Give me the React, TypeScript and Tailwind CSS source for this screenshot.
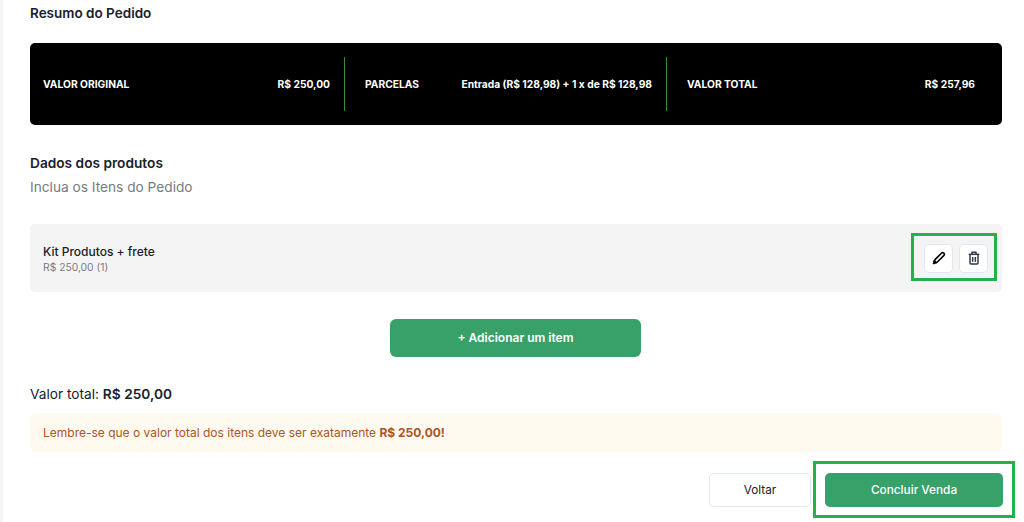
const fontFamily = 'font-["Inter",sans-serif]';

function SummaryCell({ label, value, className }: { label: string; value: string; className: string }) {
  return (
    <div className={`flex h-[54px] items-center justify-between pt-[1px] text-[10.25px] font-bold text-white ${className}`}>
      <span>{label}</span>
      <span>{value}</span>
    </div>
  );
}

function PencilIcon() {
  return (
    <svg viewBox="0 0 24 24" className="h-[16px] w-[16px] text-black" fill="none" stroke="currentColor" strokeWidth="2.4" strokeLinejoin="round">
      <path d="M5 19l1-4.5L16 4.5a2.1 2.1 0 0 1 3 0l.5.5a2.1 2.1 0 0 1 0 3L9.5 18z" />
      <path d="M3 21l1.5-6 4.5 4.5z" fill="currentColor" strokeWidth="1" />
    </svg>
  );
}

function TrashIcon() {
  return (
    <svg viewBox="0 0 24 24" className="h-[16px] w-[16px] text-[#2d3748]" fill="none" stroke="currentColor" strokeWidth="2.2" strokeLinejoin="round">
      <path d="M4 6.5h16" />
      <path d="M9 6V3.5h6V6" />
      <path d="M6 7v12.5a1.5 1.5 0 0 0 1.5 1.5h9a1.5 1.5 0 0 0 1.5-1.5V7" />
      <path d="M10 10.5v7M14 10.5v7" />
    </svg>
  );
}

export default function App() {
  return (
    <div className={`${fontFamily} relative h-[522px] w-[1024px] overflow-hidden bg-white`}>
      <div className="flex h-full">
        <div className="w-[3px] shrink-0 bg-[#f5f5f5]" />
        <main className="ml-[27px] w-[972px]">
          <h2 className="mt-[4px] h-[18px] text-[13.5px] leading-[18px] font-semibold text-[#1a202c]">Resumo do Pedido</h2>

          <section className="mt-[21px] flex h-[82px] items-center rounded-[5px] bg-black">
            <SummaryCell
              label="VALOR ORIGINAL"
              value="R$ 250,00"
              className="w-[315px] border-r border-[#2f8f3a] pr-[14px] pl-[13px]"
            />
            <SummaryCell
              label="PARCELAS"
              value="Entrada (R$ 128,98) + 1 x de R$ 128,98"
              className="w-[322px] border-r border-[#2f8f3a] pr-[14px] pl-[20px]"
            />
            <SummaryCell label="VALOR TOTAL" value="R$ 257,96" className="w-[308px] pl-[20px]" />
          </section>

          <h2 className="mt-[29px] h-[18px] text-[13.7px] leading-[18px] font-semibold text-[#1a202c]">Dados dos produtos</h2>
          <p className="mt-[6px] h-[18px] text-[13.7px] leading-[18px] text-[#757c7f]">Inclua os Itens do Pedido</p>

          <section className="mt-[28px] flex h-[68px] items-center justify-between rounded-[5px] bg-[#f4f4f4] pr-[14px] pl-[13px]">
            <div className="pt-[2px]">
              <p className="text-[12px] leading-[16px] font-medium text-[#1a202c]">Kit Produtos + frete</p>
              <p className="text-[10.3px] leading-[14px] text-[#757c7f]">R$ 250,00 (1)</p>
            </div>
            <div className="flex gap-[6px]">
              <button className="flex h-[29px] w-[29px] items-center justify-center rounded-[5px] border border-[#e2e8f0] bg-white">
                <PencilIcon />
              </button>
              <button className="flex h-[29px] w-[29px] items-center justify-center rounded-[5px] border border-[#e2e8f0] bg-white">
                <TrashIcon />
              </button>
            </div>
          </section>

          <div className="mt-[27px] flex justify-center pr-[1px]">
            <button className="h-[38px] w-[251px] rounded-[6px] bg-[#38a169] text-[12px] font-semibold text-white">
              + Adicionar um item
            </button>
          </div>

          <p className="mt-[28px] h-[18px] text-[13.7px] leading-[18px] font-normal text-[#1a202c]">
            Valor total: <span className="font-semibold">R$ 250,00</span>
          </p>

          <div className="mt-[10px] flex h-[39px] items-center rounded-[6px] bg-[#fffaf0] pl-[13px] text-[12px] text-[#ad5420]">
            <span>
              Lembre-se que o valor total dos itens deve ser exatamente <span className="font-bold">R$ 250,00!</span>
            </span>
          </div>

          <div className="mt-[21px] -mr-[1px] flex justify-end gap-[14px]">
            <button className="h-[34px] w-[102px] rounded-[5px] border border-[#e2e8f0] bg-white pt-[1px] text-[11.7px] font-normal text-[#1a202c]">
              Voltar
            </button>
            <button className="h-[34px] w-[178px] rounded-[5px] bg-[#38a169] pt-[1px] text-[11.8px] font-medium text-white">
              Concluir Venda
            </button>
          </div>
        </main>
      </div>

      {/* marcacoes verdes por cima da tela */}
      <div className="absolute top-[233px] left-[911px] h-[48px] w-[86px] border-[3px] border-[#22b14c]" />
      <div className="absolute top-[461px] left-[813px] h-[57px] w-[202px] border-[3px] border-[#22b14c]" />
    </div>
  );
}
